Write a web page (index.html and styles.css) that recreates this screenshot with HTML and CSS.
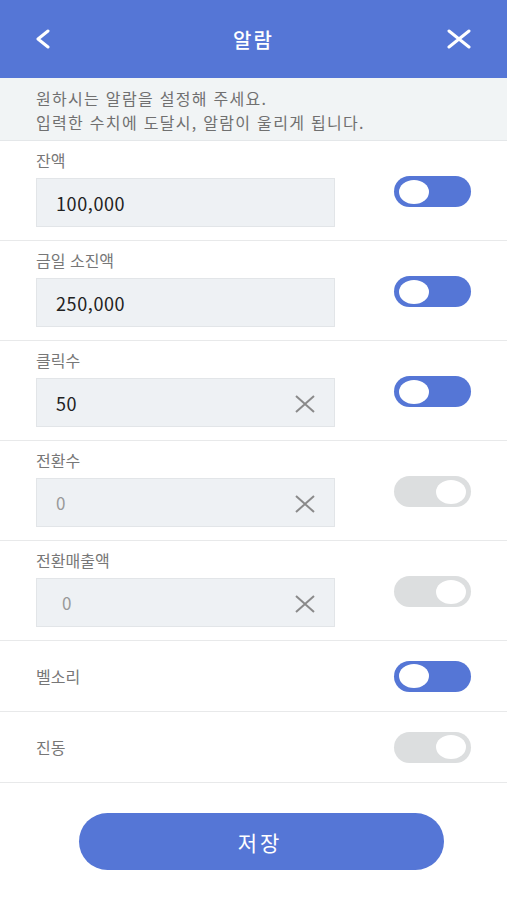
FILE: index.html
```html
<!DOCTYPE html>
<html lang="ko">
<head>
    <meta charset="UTF-8">
    <meta name="viewport" content="width=device-width, initial-scale=1.0">
    <title>알람</title>
    <link rel="stylesheet" href="styles.css">
</head>
<body>

    <div class="header">
        <a class="header-btn" href="#">
            <svg width="16" height="20" viewBox="0 0 16 20"><path d="M13 2 L3 10 L13 18" fill="none" stroke="#fff" stroke-width="3" stroke-linecap="round" stroke-linejoin="round"/></svg>
        </a>
        <h1>알람</h1>
        <a class="header-btn" href="#">
            <svg width="26" height="20" viewBox="0 0 26 20"><path d="M3 2 L23 18 M23 2 L3 18" fill="none" stroke="#fff" stroke-width="3" stroke-linecap="round"/></svg>
        </a>
    </div>

    <div class="notice">
        <p>원하시는 알람을 설정해 주세요.</p>
        <p>입력한 수치에 도달시, 알람이 울리게 됩니다.</p>
    </div>

    <div class="row">
        <div class="field">
            <label>잔액</label>
            <div class="input-box"><span class="value">100,000</span></div>
        </div>
        <span class="toggle on"><span class="knob"></span></span>
    </div>

    <div class="row">
        <div class="field">
            <label>금일 소진액</label>
            <div class="input-box"><span class="value">250,000</span></div>
        </div>
        <span class="toggle on"><span class="knob"></span></span>
    </div>

    <div class="row">
        <div class="field">
            <label>클릭수</label>
            <div class="input-box">
                <span class="value">50</span>
                <svg class="clear" width="22" height="18" viewBox="0 0 22 18"><path d="M2 1 L20 17 M20 1 L2 17" stroke="#8a8a8a" stroke-width="2" fill="none"/></svg>
            </div>
        </div>
        <span class="toggle on"><span class="knob"></span></span>
    </div>

    <div class="row">
        <div class="field">
            <label>전환수</label>
            <div class="input-box">
                <span class="value off">0</span>
                <svg class="clear" width="22" height="18" viewBox="0 0 22 18"><path d="M2 1 L20 17 M20 1 L2 17" stroke="#8a8a8a" stroke-width="2" fill="none"/></svg>
            </div>
        </div>
        <span class="toggle"><span class="knob"></span></span>
    </div>

    <div class="row">
        <div class="field">
            <label>전환매출액</label>
            <div class="input-box">
                <span class="value off shifted">0</span>
                <svg class="clear" width="22" height="18" viewBox="0 0 22 18"><path d="M2 1 L20 17 M20 1 L2 17" stroke="#8a8a8a" stroke-width="2" fill="none"/></svg>
            </div>
        </div>
        <span class="toggle"><span class="knob"></span></span>
    </div>

    <div class="row simple">
        <label>벨소리</label>
        <span class="toggle on"><span class="knob"></span></span>
    </div>

    <div class="row simple">
        <label>진동</label>
        <span class="toggle"><span class="knob"></span></span>
    </div>

    <div class="save-area">
        <button type="button" class="save-btn">저장</button>
    </div>

</body>
</html>
```

FILE: styles.css
```css
body {
    margin: 0;
    font-family: "Noto Sans CJK KR", "Noto Sans", sans-serif;
    background-color: white;
}
.header {
    height: 78px;
    background-color: #5576d6;
    display: flex;
    align-items: center;
    justify-content: space-between;
    padding: 0 35px 0 35px;
}
.header h1 {
    margin: 0;
    color: white;
    font-size: 20px;
    font-weight: 500;
    letter-spacing: 2px;
}
.header-btn {
    display: flex;
    align-items: center;
    width: 26px;
}
.header-btn:last-child {
    justify-content: flex-end;
}
.notice {
    background-color: #f1f4f5;
    color: #707070;
    font-size: 16px;
    letter-spacing: 1.3px;
    padding: 8px 36px 6px;
    border-bottom: 1px solid #e4e7e9;
}
.notice p {
    margin: 0;
    height: 24px;
    line-height: 24px;
    white-space: nowrap;
}
.row {
    display: flex;
    align-items: flex-start;
    justify-content: space-between;
    padding: 8px 36px 13px;
    border-bottom: 1px solid #e8e9ea;
}
.row label {
    display: block;
    color: #777;
    font-size: 16px;
    line-height: 22px;
}
.field {
    width: 299px;
}
.input-box {
    margin-top: 7px;
    height: 47px;
    background-color: #eef1f4;
    border: 1px solid #e2e5e8;
    display: flex;
    align-items: center;
    justify-content: space-between;
    padding: 0 18px 0 19px;
}
.value {
    color: #222;
    font-size: 18px;
    letter-spacing: 0.6px;
}
.value.off {
    color: #999;
    font-size: 17px;
}
.value.shifted {
    margin-left: 6px;
}
.clear {
    margin-top: 2px;
}
.toggle {
    margin-top: 27px;
    width: 77px;
    height: 31px;
    border-radius: 16px;
    background-color: #dcdedf;
    display: flex;
    align-items: center;
    justify-content: flex-end;
    padding: 0 5px;
    box-sizing: border-box;
}
.toggle.on {
    background-color: #5576d6;
    justify-content: flex-start;
}
.knob {
    width: 30px;
    height: 24px;
    border-radius: 50%;
    background-color: white;
}
.row.simple {
    height: 71px;
    box-sizing: border-box;
    padding: 0 36px;
    align-items: center;
}
.row.simple .toggle {
    margin-top: 0;
}
.save-area {
    display: flex;
    justify-content: center;
    padding: 30px 0 0 16px;
}
.save-btn {
    width: 365px;
    height: 57px;
    border: none;
    border-radius: 29px;
    background-color: #5576d6;
    color: white;
    font-family: "Noto Sans CJK KR", sans-serif;
    font-size: 21px;
    letter-spacing: 3px;
    padding-left: 3px;
}
```
